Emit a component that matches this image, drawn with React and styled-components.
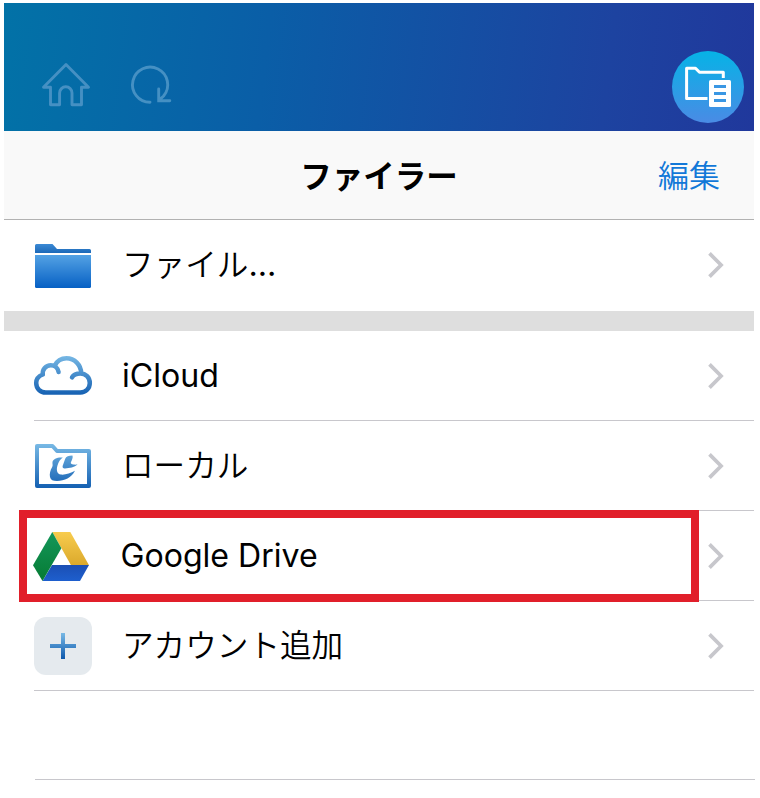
import React from "react";
import styled, { createGlobalStyle } from "styled-components";

const App = () => {
  return (
    <>
      <GlobalStyle />
      <Screen>
        <Header>
          <Tools>
            <HomeIcon />
            <ReloadIcon />
          </Tools>
          <Badge>
            <FilerIcon />
          </Badge>
        </Header>
        <TitleBar>
          <Title>ファイラー</Title>
          <EditButton type="button">編集</EditButton>
        </TitleBar>
        <Row $height={91}>
          <FolderIcon />
          <Label>
            ファイル<Dots>...</Dots>
          </Label>
          <Chevron />
        </Row>
        <Divider />
        <Row $line>
          <CloudIcon />
          <Label $latin>iCloud</Label>
          <Chevron />
        </Row>
        <Row $line>
          <LocalIcon />
          <Label>ローカル</Label>
          <Chevron />
        </Row>
        <Row $line>
          <DriveIcon />
          <Label $latin $shift={-1.5}>
            Google Drive
          </Label>
          <Chevron />
          <Highlight />
        </Row>
        <Row $line>
          <AddIcon />
          <Label>アカウント追加</Label>
          <Chevron />
        </Row>
        <EmptyRow />
      </Screen>
    </>
  );
};

export default App;

// Icons
const HomeIcon = () => (
  <svg width="50" height="46" viewBox="0 0 50 46" fill="none">
    <path
      d="M25 3.5 L47.5 26.2 H40.5 V43.7 H31 V32 A6.2 6.2 0 0 0 18.6 32 V43.7 H9.5 V26.2 H2.5 Z"
      stroke="#4590c3"
      strokeWidth="2.9"
      strokeLinejoin="round"
    />
  </svg>
);

const ReloadIcon = () => (
  <svg width="43" height="46" viewBox="0 0 43 46" fill="none">
    <path
      d="M21 41.3 A17.6 17.6 0 1 1 34.6 35 L29.9 39.4 M29.7 28 V39.7 H40.8"
      stroke="#4590c3"
      strokeWidth="2.9"
      strokeLinecap="round"
    />
  </svg>
);

const FilerIcon = () => (
  <svg width="72" height="72" viewBox="0 0 72 72" fill="none">
    <path
      d="M35.5 47.4 H14.6 V17.2 H23.5 L27.5 21.3 H51.3 V27"
      stroke="#fff"
      strokeWidth="3"
      strokeLinejoin="round"
    />
    <rect x="37" y="29" width="22" height="27" rx="1.5" fill="#fff" />
    <path d="M42 35.5 H54 M42 42.5 H54 M42 49.4 H54" stroke="#3a97e3" strokeWidth="3" />
  </svg>
);

const FolderIcon = () => (
  <Icon viewBox="0 0 58 58">
    <defs>
      <linearGradient id="folderTab" x1="0" y1="0" x2="0" y2="1">
        <stop offset="0" stopColor="#3b8ad5" />
        <stop offset="1" stopColor="#1d69b8" />
      </linearGradient>
      <linearGradient id="folderBody" x1="0" y1="0" x2="0" y2="1">
        <stop offset="0" stopColor="#54a2e4" />
        <stop offset="1" stopColor="#0660c4" />
      </linearGradient>
    </defs>
    <path d="M1 17 V9.5 Q1 8 2.5 8 H18.5 L23 13 H55.5 Q57 13 57 14.5 V17 Z" fill="url(#folderTab)" />
    <path d="M1 19 H57 V50.5 Q57 52 55.5 52 H2.5 Q1 52 1 50.5 Z" fill="url(#folderBody)" />
  </Icon>
);

const CloudIcon = () => (
  <Icon viewBox="0 0 58 58" fill="none">
    <defs>
      <linearGradient id="cloud" gradientUnits="userSpaceOnUse" x1="0" y1="9" x2="0" y2="48">
        <stop offset="0" stopColor="#76b7e4" />
        <stop offset="1" stopColor="#1460b2" />
      </linearGradient>
    </defs>
    <path
      d="M8.8 27.5 C4.8 29 2.2 32 2.2 36 C2.2 41.4 6.3 45.6 11.8 45.6 H46.3 C51.8 45.6 55.8 41.3 55.8 36 C55.8 30.6 51.8 26.4 46.3 26.4 C42.3 26.4 39.3 28 38 30.3 M8.8 27.5 C8.2 22.5 11.8 18.3 16.8 18.3 C21 18.3 24 21 24.6 25 M20.4 19 C23 14 27.3 11.3 32.5 11.3 C40.6 11.3 47 17.8 47.2 26.2"
      stroke="url(#cloud)"
      strokeWidth="4.5"
      strokeLinecap="round"
    />
  </Icon>
);

const LocalIcon = () => (
  <Icon viewBox="0 0 58 58" fill="none">
    <defs>
      <linearGradient id="local" gradientUnits="userSpaceOnUse" x1="0" y1="7" x2="0" y2="51">
        <stop offset="0" stopColor="#78b9e5" />
        <stop offset="1" stopColor="#1460b2" />
      </linearGradient>
    </defs>
    <path
      d="M3 9 H18.5 L23 14 H55 V49 H3 Z"
      stroke="url(#local)"
      strokeWidth="4"
      strokeLinejoin="round"
    />
    <path
      d="M28.8 20.6 C23.5 20 19 22.2 18.5 25 C18.2 27 19.2 28 18.2 30 C16.2 33.5 15.3 37 16 40 C16.8 43 19 44 23 44 C30.5 44 37.5 40.8 41 33.8 C36.5 36.5 31 38 27 37.6 C22.5 37 22.3 32.5 23.5 28.5 C24.5 25 26.3 22.5 28.8 20.6 Z"
      fill="url(#local)"
    />
    <path
      d="M38.4 18.5 C34.8 18.5 32 19.3 31.2 21.8 L28.7 28.8 C28.2 30.8 29.2 31.6 31 31.5 C35.5 31.2 40.5 30.4 43.6 27.6 C41.5 27.6 39 27.8 37.6 27.1 C36 26.2 37.2 24.8 38 22.8 C38.7 21 38.9 19.8 38.4 18.5 Z"
      fill="url(#local)"
    />
  </Icon>
);

const DriveIcon = () => (
  <Icon viewBox="0 0 58 58">
    <defs>
      <linearGradient id="driveGreen" x1="0" y1="0" x2="0" y2="1">
        <stop offset="0" stopColor="#14975a" />
        <stop offset="1" stopColor="#067b34" />
      </linearGradient>
      <linearGradient id="driveYellow" x1="0" y1="0" x2="0" y2="1">
        <stop offset="0" stopColor="#f8cc4e" />
        <stop offset="1" stopColor="#dba92c" />
      </linearGradient>
      <linearGradient id="driveBlue" x1="0" y1="0" x2="0" y2="1">
        <stop offset="0" stopColor="#1b4fb4" />
        <stop offset="1" stopColor="#1e5fce" />
      </linearGradient>
    </defs>
    <path d="M18.3 5 H36.3 L55 38.2 H37 Z" fill="url(#driveYellow)" />
    <path d="M18 38 H55 L46 54 H8.5 Z" fill="url(#driveBlue)" />
    <path d="M18.3 5 L27.4 21.3 L8.5 54 L-1 38.3 Z" fill="url(#driveGreen)" />
  </Icon>
);

const AddIcon = () => (
  <Icon viewBox="0 0 58 58">
    <defs>
      <linearGradient id="plus" x1="0" y1="0" x2="0" y2="1">
        <stop offset="0" stopColor="#78b9e5" />
        <stop offset="1" stopColor="#0d58ac" />
      </linearGradient>
    </defs>
    <rect width="58" height="58" rx="12" fill="#e5eaee" />
    <path d="M27 16 H31 V27 H42 V31 H31 V42 H27 V31 H16 V27 H27 Z" fill="url(#plus)" />
  </Icon>
);

const Chevron = () => (
  <ChevronSvg viewBox="0 0 16 28" fill="none">
    <path d="M1.5 2.4 L13.1 14 L1.5 25.6" stroke="#c7c7cc" strokeWidth="3.7" />
  </ChevronSvg>
);

// Styled Components
const GlobalStyle = createGlobalStyle`
  body {
    margin: 0;
    background: #fff;
    overflow: hidden;
  }
`;

const Screen = styled.main`
  width: 750px;
  margin: 3px 0 0 4px;
  color: #000;
  font-family: "Noto Sans CJK JP", sans-serif;
`;

const Header = styled.header`
  display: flex;
  justify-content: space-between;
  box-sizing: border-box;
  height: 128px;
  padding: 48px 10px 0 37px;
  background: linear-gradient(97deg, #0272a7 0%, #0a5ea7 35%, #1d43a0 80%, #20389c 100%);
`;

const Tools = styled.div`
  display: flex;
  gap: 38px;
  padding-top: 10px;
`;

const Badge = styled.div`
  width: 72px;
  height: 72px;
  border-radius: 50%;
  background: linear-gradient(to bottom, #06b3e6, #4a8be5);
`;

const TitleBar = styled.div`
  display: grid;
  grid-template-columns: 1fr auto 1fr;
  align-items: center;
  box-sizing: border-box;
  height: 89px;
  padding: 0 34px 3px;
  background: #f9f9f9;
  border-bottom: 1px solid #b2b2b2;
`;

const Title = styled.h1`
  grid-column: 2;
  margin: 0;
  font-size: 31.5px;
  font-weight: 700;
  line-height: 46px;
`;

const EditButton = styled.button`
  justify-self: end;
  padding: 0;
  border: none;
  background: none;
  color: #1278d8;
  font-family: inherit;
  font-size: 31px;
  font-weight: 350;
  line-height: 46px;
`;

const Row = styled.div`
  position: relative;
  display: flex;
  align-items: flex-start;
  box-sizing: border-box;
  height: ${(props) => props.$height || 90}px;
  margin-left: 30px;
  padding: 16px 30px 0 0;
  border-bottom: ${(props) => (props.$line ? "1px solid #c8c7cc" : "none")};
`;

const EmptyRow = styled.div`
  box-sizing: border-box;
  height: 89px;
  margin: 0 -1px 0 31px;
  border-bottom: 1px solid #c8c7cc;
`;

const Divider = styled.div`
  height: 20px;
  background: #dedede;
`;

const Icon = styled.svg`
  flex: none;
  width: 58px;
  height: 58px;
  overflow: visible;
`;

const Label = styled.span`
  flex: 1;
  margin-left: ${(props) => 30 + (props.$shift || 0)}px;
  font-family: ${(props) => (props.$latin ? "Inter, sans-serif" : "inherit")};
  font-size: ${(props) => (props.$latin ? 32.1 : 31.6)}px;
  font-weight: ${(props) => (props.$latin ? 400 : 350)};
  line-height: ${(props) => (props.$latin ? 58 : 53)}px;
  white-space: nowrap;
`;

const Dots = styled.span`
  font-family: Inter, sans-serif;
  font-size: 32.5px;
  font-weight: 400;
  line-height: 1;
`;

const ChevronSvg = styled.svg`
  flex: none;
  width: 16px;
  height: 28px;
  margin: 15px 0 0;
`;

// Red frame drawn over the selected service
const Highlight = styled.div`
  position: absolute;
  top: -1px;
  left: -15px;
  box-sizing: border-box;
  width: 680px;
  height: 92px;
  border: 8px solid #e11f2a;
`;
